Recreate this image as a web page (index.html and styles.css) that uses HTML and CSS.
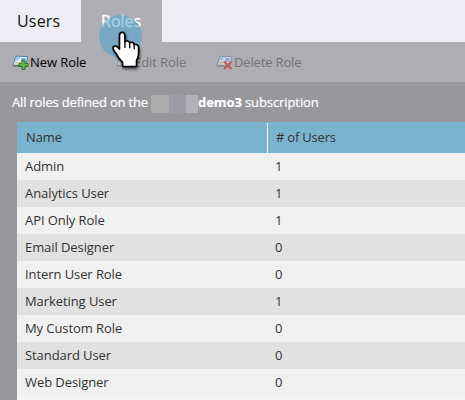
FILE: index.html
```html
<!DOCTYPE html>
<html lang="en">
<head>
<meta charset="utf-8">
<title>Roles</title>
<link rel="stylesheet" href="styles.css">
</head>
<body>
<svg class="defs" aria-hidden="true">
  <symbol id="card" viewBox="0 0 17 15">
    <path d="M4 1.2 15.6 1.6 13.8 10.6 .9 10.2z" fill="#f3f7f8" stroke="#4d83ae" stroke-width="1"/>
    <path d="M1 10.8 13.5 11.2" stroke="#56676d" stroke-width="1.2"/>
    <path d="M4.4 2 9 2.2 5.5 5.8 2.8 6z" fill="#a3c9ea"/>
    <path d="M9 3h5l-.8 4-4 .5z" fill="#78b2dc"/>
    <path d="M3.2 7.5h5M3 9h4" stroke="#cfbd63" stroke-width="1"/>
  </symbol>
</svg>
<nav class="tabs">
  <a class="tab users">Users</a>
  <a class="tab active">Roles</a>
</nav>
<div class="toolbar">
  <a class="tool new"><svg class="icon" viewBox="0 0 17 15"><use href="#card"/><path d="M10 5.4h3v3h2.9v3h-2.9v3h-3v-3H7v-3h3z" fill="#63bd50" stroke="#1c6b1d" stroke-width=".9"/></svg><span>New Role</span></a>
  <a class="tool edit off"><svg class="icon" viewBox="0 0 17 15"><use href="#card"/><path d="m7 13 1-3 5-5 2 2-5 5z" fill="#dda34b" stroke="#765c35" stroke-width=".8"/></svg><span>Edit Role</span></a>
  <a class="tool delete off"><svg class="icon" viewBox="0 0 17 15"><use href="#card"/><path d="m8 6.5 7.5 7.5m0-7.5L8 14" stroke="#d51f24" stroke-width="2.3"/></svg><span>Delete Role</span></a>
</div>
<main class="panel">
  <p class="caption"><span class="lead">All roles defined on the</span><span class="mask"><i></i><i></i><i></i></span><b>demo3</b><span class="sub">subscription</span></p>
  <table class="grid">
    <thead><tr><th class="name"><span>Name</span></th><th class="count"><span>#&nbsp;of Users</span></th></tr></thead>
    <tbody>
      <tr><td>Admin</td><td>1</td></tr>
      <tr><td>Analytics User</td><td>1</td></tr>
      <tr><td>API Only Role</td><td>1</td></tr>
      <tr><td>Email Designer</td><td>0</td></tr>
      <tr><td>Intern User Role</td><td>0</td></tr>
      <tr><td>Marketing User</td><td>1</td></tr>
      <tr><td>My Custom Role</td><td>0</td></tr>
      <tr><td>Standard User</td><td>0</td></tr>
      <tr><td>Web Designer</td><td>0</td></tr>
    </tbody>
  </table>
</main>
<div class="halo"></div>
<svg class="hand" viewBox="0 0 96 120">
  <path d="M31 7c5 0 8 4 8 9v19c2-5 13-5 14 3 4-4 12-2 13 5 5-3 13 0 13 8v18c0 10-3 14-6 21v13c0 3-2 4-4 4H36c-3 0-4-2-4-4v-8C25 88 17 78 14 70 10 63 4 60 4 53c0-6 8-8 13-4l6 7V16c0-5 3-9 8-9z" fill="#fff" stroke="#080808" stroke-width="5" stroke-linejoin="round"/>
  <path d="M39 33v18M53 38v14M66 43v12" fill="none" stroke="#080808" stroke-width="4" stroke-linecap="round"/>
</svg>
</body>
</html>
```
FILE: styles.css
```css
* { box-sizing: border-box; }
body {
  margin: 0;
  height: 400px;
  overflow: hidden;
  position: relative;
  background: #98979c;
  font: 13px/18px "Open Sans", "Noto Sans", sans-serif;
  letter-spacing: -.08px;
  color: #333;
}
.defs { position: absolute; width: 0; height: 0; }
.tabs { display: flex; height: 42px; background: #eeedf3; letter-spacing: .2px; }
.tab { width: 81px; padding-left: 17px; font-size: 16px; line-height: 42px; color: #111; }
.tab.active { padding-left: 20px; background: #aeadb2; color: #fff; letter-spacing: 0; -webkit-text-stroke: .3px #fff; }
.toolbar { display: flex; height: 40px; background: #aeadb2; color: #000; padding-left: 12px; }
.tool { display: flex; align-items: center; height: 40px; white-space: nowrap; }
.new { width: 104px; }
.edit { width: 100px; }
.icon { width: 17px; height: 15px; margin: 1px 1px 0 0; flex: none; }
.off { color: #737277; }
.delete { letter-spacing: -.15px; }
.off .icon { opacity: .55; }
.panel { padding-left: 17px; }
.caption {
  display: flex;
  align-items: center;
  height: 40px;
  margin: 0 0 0 -5px;
  color: #fff;
  white-space: nowrap;
  letter-spacing: -.17px;
  -webkit-text-stroke: .2px #fff;
}
.lead { width: 139px; }
.mask { display: flex; width: 47px; height: 18px; margin-top: 4px; }
.mask i { width: 18px; background: #aeacad; }
.mask i:nth-child(2) { width: 17px; background: #9c9da2; }
.mask i:nth-child(3) { width: 12px; background: #b2b1b7; }
.caption b { letter-spacing: -.05px; }
.sub { margin-left: 3px; letter-spacing: -.08px; }
.grid { width: 448px; table-layout: fixed; border-collapse: collapse; background: #f5f5f5; }
.grid th, .grid td { padding: 0 0 1px 8px; text-align: left; font-weight: 400; }
.grid th { height: 31px; background: #7ab3ce; padding-left: 9px; }
.grid .name { width: 250px; }
.grid .count { padding: 1px 0 0; letter-spacing: -.2px; }
.count span { display: block; height: 30px; border-left: 1px solid #fff; padding-left: 8px; line-height: 28px; }
.grid tbody tr { height: 27px; background: #f0f0f0; }
.grid tbody tr:nth-child(even) { background: #e1e1e1; }
.panel::after { content: ""; display: block; height: 4px; background: #f5f5f5; }
.halo {
  position: absolute;
  left: 99px;
  top: 15px;
  width: 43px;
  height: 43px;
  border-radius: 50%;
  background: rgba(66, 163, 212, .5);
}
.hand { position: absolute; left: 111px; top: 30px; width: 34px; height: 41px; filter: drop-shadow(1px 2px 1px rgba(0, 0, 0, .5)); }
```
